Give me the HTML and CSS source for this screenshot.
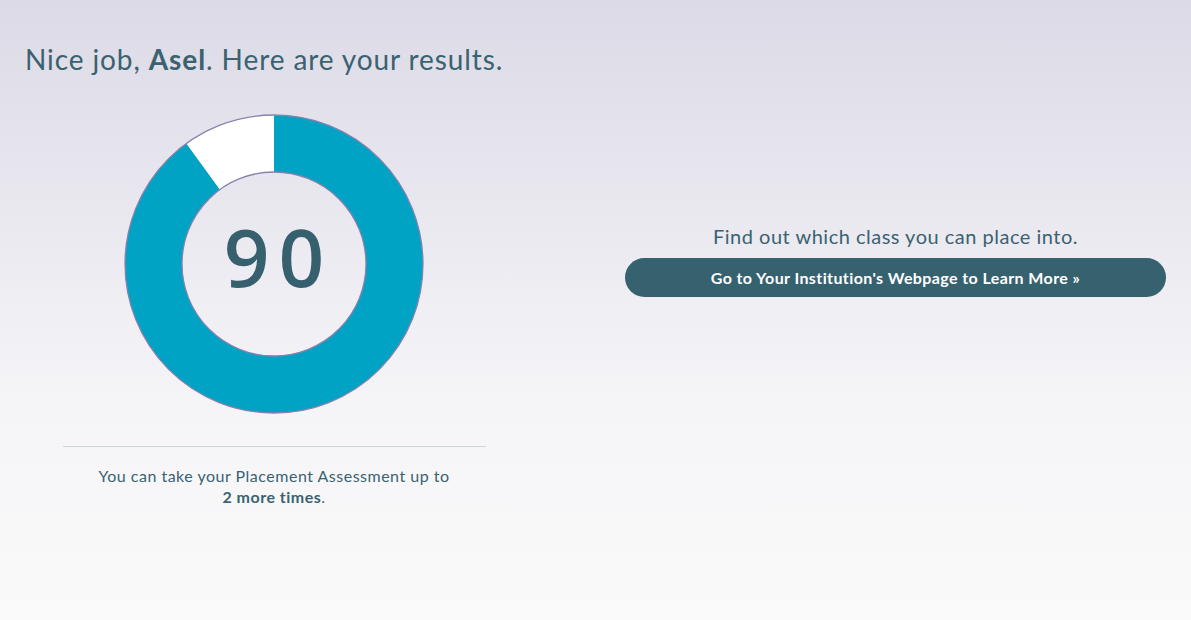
FILE: index.html
```html
<!DOCTYPE html>
<html>
<head>
<meta charset="utf-8">
<link rel="stylesheet" href="styles.css">
</head>
<body>
<main class="page">
  <h1 class="title">Nice job, <strong>Asel</strong>. Here are your results.</h1>
  <div class="results">
    <section class="score-col">
      <div class="donut">
        <svg width="300" height="300" viewBox="0 0 300 300">
          <path d="M150,1 A149,149 0 1,1 62.42,29.46 L95.92,75.57 A92,92 0 1,0 150,58 Z" fill="#00a3c4"/>
          <path d="M62.42,29.46 A149,149 0 0,1 150,1 L150,58 A92,92 0 0,0 95.92,75.57 Z" fill="#ffffff"/>
          <circle cx="150" cy="150" r="149" fill="none" stroke="#8a80ad" stroke-width="1.3"/>
          <circle cx="150" cy="150" r="92" fill="none" stroke="#8a80ad" stroke-width="1.3"/>
        </svg>
        <div class="score">90</div>
      </div>
      <hr class="divider">
      <p class="attempts">You can take your Placement Assessment up to<br><strong>2 more times</strong>.</p>
    </section>
    <section class="cta-col">
      <p class="cta-text">Find out which class you can place into.</p>
      <a class="cta-btn" href="#">Go to Your Institution's Webpage to Learn More »</a>
    </section>
  </div>
</main>
</body>
</html>
```
FILE: styles.css
```css
html, body {
  margin: 0;
  height: 100%;
}
body {
  background: linear-gradient(to bottom, #dcdae6 0%, #f5f5f8 65%, #fafafa 100%);
  font-family: Lato, "Noto Sans", sans-serif;
  color: #3a6270;
}
.page {
  padding: 0 25px;
}
.title {
  margin: 0;
  padding-top: 42px;
  font-size: 28px;
  line-height: 34px;
  font-weight: 400;
  letter-spacing: 0.9px;
  color: #3a6270;
}
.title strong {
  font-weight: 700;
}
.results {
  display: grid;
  grid-template-columns: 498px 541px;
  column-gap: 102px;
  margin-top: 38px;
}
.score-col {
  display: flex;
  flex-direction: column;
  align-items: center;
}
.donut {
  position: relative;
  width: 300px;
  height: 300px;
}
.donut svg {
  display: block;
}
.score {
  position: absolute;
  inset: 0;
  display: flex;
  align-items: center;
  justify-content: center;
  padding-bottom: 18px;
  padding-left: 9px;
  font-family: "Open Sans", Lato, sans-serif;
  font-size: 80px;
  font-weight: 600;
  letter-spacing: 9px;
  color: #36606e;
}
.divider {
  width: 423px;
  border: 0;
  border-top: 1px solid #cfd6d8;
  margin: 32px 0 0;
}
.attempts {
  margin: 18px 0 0;
  text-align: center;
  font-size: 16px;
  line-height: 21px;
  letter-spacing: 0.5px;
}
.attempts strong {
  font-weight: 700;
}
.cta-col {
  display: flex;
  flex-direction: column;
  align-items: stretch;
  padding-top: 109px;
}
.cta-text {
  margin: 0;
  text-align: center;
  font-size: 20px;
  line-height: 26px;
  letter-spacing: 0.5px;
}
.cta-btn {
  display: flex;
  align-items: center;
  justify-content: center;
  height: 39px;
  margin-top: 9px;
  border-radius: 20px;
  background: #36626f;
  color: #ffffff;
  font-size: 16px;
  font-weight: 700;
  letter-spacing: 0.4px;
  text-decoration: none;
}
```
